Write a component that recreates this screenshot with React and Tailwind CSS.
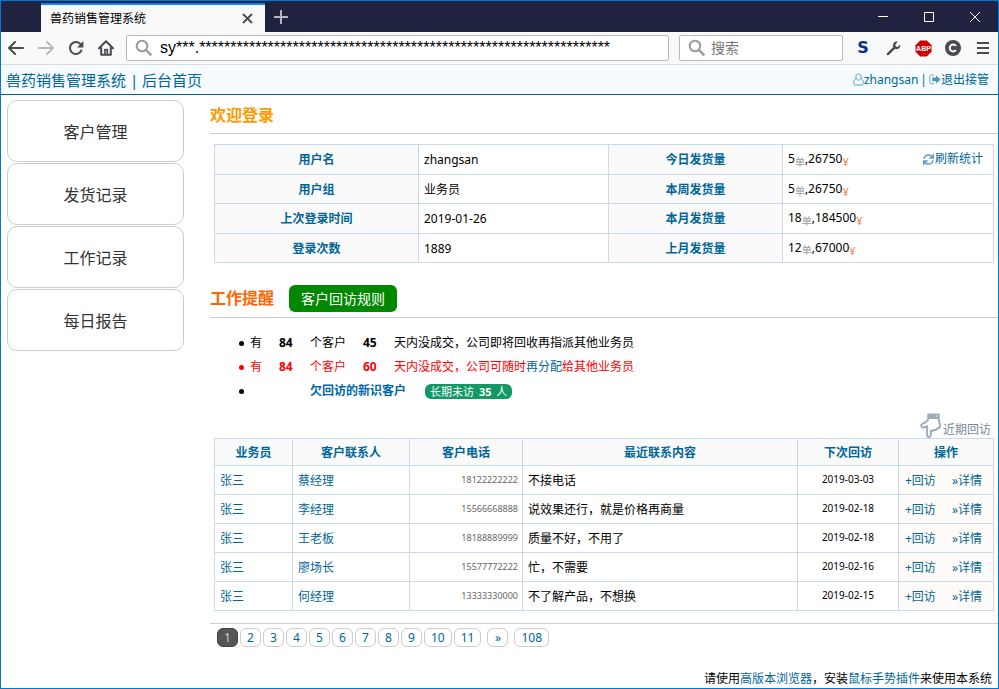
import { useState } from 'react'
import { FaSync } from 'react-icons/fa'

const menu = ['客户管理', '发货记录', '工作记录', '每日报告']

const stats = [
    { label: '用户名', value: 'zhangsan', period: '今日发货量', count: 5, amount: 26750 },
    { label: '用户组', value: '业务员', period: '本周发货量', count: 5, amount: 26750 },
    { label: '上次登录时间', value: '2019-01-26', period: '本月发货量', count: 18, amount: 184500 },
    { label: '登录次数', value: '1889', period: '上月发货量', count: 12, amount: 67000 },
]

const visits = [
    { sales: '张三', contact: '蔡经理', phone: '18122222222', content: '不接电话', next: '2019-03-03' },
    { sales: '张三', contact: '李经理', phone: '15566668888', content: '说效果还行，就是价格再商量', next: '2019-02-18' },
    { sales: '张三', contact: '王老板', phone: '18188889999', content: '质量不好，不用了', next: '2019-02-18' },
    { sales: '张三', contact: '廖场长', phone: '15577772222', content: '忙，不需要', next: '2019-02-16' },
    { sales: '张三', contact: '何经理', phone: '13333330000', content: '不了解产品，不想换', next: '2019-02-15' },
]

const pages = [2, 3, 4, 5, 6, 7, 8, 9, 10, 11]

const SearchIcon = () => (
    <svg width="18" height="18" viewBox="0 0 18 18" fill="none" stroke="#9a9a9a" strokeWidth="2" className="shrink-0">
        <circle cx="7" cy="7" r="5.3" />
        <path d="M11 11l5.3 5.3" strokeWidth="2.4" />
    </svg>
)

const UserIcon = () => (
    <svg width="11" height="13" viewBox="0 0 11 13" fill="none" stroke="#5b9cc0" className="shrink-0">
        <path d="M5.5 1C3.9 1 2.8 2.2 2.8 3.9S4 7.1 5.5 7.1 8.2 5.6 8.2 3.9 7.1 1 5.5 1z" />
        <path d="M2.8 5.8C1.3 6.6.7 8.3.7 10.2c0 1.2.7 1.8 1.8 1.8h6c1.1 0 1.8-.6 1.8-1.8 0-1.9-.6-3.6-2.1-4.4" />
    </svg>
)

const ExitIcon = () => (
    <svg width="12" height="11" viewBox="0 0 12 11" className="shrink-0">
        <path d="M5 1H2.4C1.4 1 .8 1.6.8 2.5v5.8c0 .9.6 1.5 1.6 1.5H5" fill="none" stroke="#6aa3c4" />
        <path d="M7 1.4l4.6 4L7 9.4V7.2H3.2V3.6H7z" fill="#5595bb" />
    </svg>
)

const HandDownIcon = () => (
    <svg width="22" height="25" viewBox="0 0 22 25" fill="none" stroke="#a0adbd" strokeWidth="2" strokeLinejoin="round" className="shrink-0">
        <rect x="8" y="1.2" width="11" height="4" fill="#a0adbd" strokeWidth="1.5" />
        <path d="M16.5 3.2h1" stroke="#fff" strokeWidth="1.2" />
        <path d="M8.2 6C8 8 6.5 8.6 4.8 9.6 3.2 10.5 1.2 10.8 1.2 12.6c0 1.7 1.7 2.3 3.3 1.7l2.6-1v8.6c0 1.3.7 2 1.8 2s1.9-.7 1.9-2v-4.4c1.3.8 2.7.4 3.3-.7 1.4.5 2.6-.1 3-1.3 1.7 0 2.9-1 2.9-2.7 0-2.6-1.2-4-1.2-6.8" />
    </svg>
)

const TitleBar = () => (
    <div className="flex h-[31px] items-end bg-[#202340]">
        <div className="ml-10 flex h-[29px] w-[224px] items-center justify-between border-t-2 border-[#0a84ff] bg-[#f9f9fa] pr-3 pl-[9px]">
            <span className="text-xs text-black">兽药销售管理系统</span>
            <button aria-label="关闭标签页">
                <svg width="11" height="11" viewBox="0 0 11 11" stroke="#4a4a4f" strokeWidth="1.8">
                    <path d="M1 1l9 9M10 1l-9 9" />
                </svg>
            </button>
        </div>
        <button aria-label="新标签页" className="flex h-[31px] w-8 items-center justify-center">
            <svg width="14" height="14" viewBox="0 0 14 14" stroke="#b4b5c0" strokeWidth="2">
                <path d="M7 0v14M0 7h14" />
            </svg>
        </button>
        <div className="ml-auto flex h-[30px]">
            <button aria-label="最小化" className="flex w-[46px] items-center justify-center">
                <svg width="10" height="10" viewBox="0 0 10 10" stroke="#fff"><path d="M0 4.5h10" /></svg>
            </button>
            <button aria-label="最大化" className="flex w-[46px] items-center justify-center">
                <svg width="10" height="10" viewBox="0 0 10 10" stroke="#fff" fill="none"><path d="M.5.5h9v9h-9z" /></svg>
            </button>
            <button aria-label="关闭" className="flex w-[46px] items-center justify-center">
                <svg width="10" height="10" viewBox="0 0 10 10" stroke="#fff"><path d="M0 0l10 10M10 0L0 10" /></svg>
            </button>
        </div>
    </div>
)

const ToolBar = () => {
    const [url, setUrl] = useState('sy***.' + '*'.repeat(66))
    const [keyword, setKeyword] = useState('')
    return (
        <div className="flex h-[33px] items-center border-b border-[#d8dbe2] bg-[#f9f9fa]">
            <button aria-label="后退" className="flex w-[30px] justify-center">
                <svg width="16" height="14" viewBox="0 0 16 14" fill="none" stroke="#4a4a4f" strokeWidth="2" strokeLinecap="round" strokeLinejoin="round">
                    <path d="M15 7H1.5M7 1L1 7l6 6" />
                </svg>
            </button>
            <button aria-label="前进" className="flex w-[30px] justify-center">
                <svg width="16" height="14" viewBox="0 0 16 14" fill="none" stroke="#b8b8ba" strokeWidth="2" strokeLinecap="round" strokeLinejoin="round">
                    <path d="M1 7h13.5M9 1l6 6-6 6" />
                </svg>
            </button>
            <button aria-label="刷新" className="flex w-[30px] justify-center">
                <svg width="16" height="16" viewBox="0 0 16 16" fill="none" stroke="#4a4a4f" strokeWidth="2">
                    <path d="M12.6 4.2A6 6 0 1 0 13.4 10.5" strokeLinecap="round" />
                    <path d="M15.4 1v6.4H9z" fill="#4a4a4f" stroke="none" />
                </svg>
            </button>
            <button aria-label="主页" className="flex w-[30px] justify-center">
                <svg width="16" height="16" viewBox="0 0 16 16" fill="none" stroke="#4a4a4f" strokeWidth="2" strokeLinecap="round" strokeLinejoin="round">
                    <path d="M1 8.2L8 1.2l7 7M3.2 8v6.8h9.6V8" />
                    <path d="M6.9 14.5V9.6h2.4v4.9" strokeWidth="1.6" />
                </svg>
            </button>
            <label className="ml-[5px] flex h-[26px] flex-1 items-center rounded-xs border border-[#b9b9bb] bg-white pl-2">
                <SearchIcon />
                <input
                    type="text"
                    aria-label="网址"
                    className="ml-[7px] min-w-0 flex-1 font-['Liberation_Sans',sans-serif] text-base leading-6 text-black outline-none"
                    value={url}
                    onChange={(e) => setUrl(e.target.value)}
                />
            </label>
            <label className="mr-[5px] ml-[10px] flex h-[26px] w-[164px] items-center rounded-xs border border-[#b9b9bb] bg-white pl-2">
                <SearchIcon />
                <input
                    type="text"
                    aria-label="搜索"
                    className="ml-[5px] min-w-0 flex-1 text-sm leading-5 outline-none placeholder:text-[#777]"
                    placeholder="搜索"
                    value={keyword}
                    onChange={(e) => setKeyword(e.target.value)}
                />
            </label>
            <button className="w-[30px] font-['DejaVu_Sans',sans-serif] text-base leading-6 font-bold text-[#00318b]">S</button>
            <button aria-label="开发者工具" className="flex w-[30px] justify-center">
                <svg width="15" height="15" viewBox="0 0 15 15">
                    <path d="M1.9 13.1L8.6 6.4" stroke="#4a4a4f" strokeWidth="2.4" strokeLinecap="round" />
                    <path d="M11.8.8C9.6 0 6.9 1.6 6.9 4.3c0 2.4 1.6 3.9 3.9 3.9 2.4 0 4.1-2.1 3.4-4.6l-2.4 2.3-2-.5-.5-2z" fill="#4a4a4f" />
                </svg>
            </button>
            <button aria-label="Adblock Plus" className="flex w-[30px] justify-center">
                <svg width="17" height="17" viewBox="0 0 17 17">
                    <path d="M5.2.5h6.6l4.7 4.7v6.6l-4.7 4.7H5.2L.5 11.8V5.2z" fill="#d00000" />
                    <text x="8.5" y="11.2" textAnchor="middle" fontSize="7" fontWeight="700" fill="#fff" fontFamily="Liberation Sans">ABP</text>
                </svg>
            </button>
            <button aria-label="扩展" className="flex w-[30px] justify-center">
                <svg width="16" height="16" viewBox="0 0 16 16">
                    <circle cx="8" cy="8" r="8" fill="#4a4a4f" />
                    <path d="M10.9 6A3.4 3.4 0 1 0 10.9 10" fill="none" stroke="#fff" strokeWidth="2" />
                </svg>
            </button>
            <button aria-label="菜单" className="flex w-[30px] justify-center">
                <svg width="12" height="12" viewBox="0 0 12 12" stroke="#4a4a4f" strokeWidth="2">
                    <path d="M0 1h12M0 6h12M0 11h12" />
                </svg>
            </button>
        </div>
    )
}

const StatsTable = () => (
    <table className="h-[119px] w-full table-fixed border-collapse">
        <colgroup>
            <col className="w-[204px]" />
            <col className="w-[190px]" />
            <col className="w-[174px]" />
            <col />
        </colgroup>
        <tbody>
            {stats.map((row, i) => (
                <tr key={row.label}>
                    <th className="border border-[#c9daea] bg-[#fafafa] pt-[2px] font-bold text-[#006699]">{row.label}</th>
                    <td className="border border-[#c9daea] px-[5px] pt-[2px]">{row.value}</td>
                    <th className="border border-[#c9daea] bg-[#fafafa] pt-[2px] font-bold text-[#006699]">{row.period}</th>
                    <td className="border border-[#c9daea] pr-[10px] pl-[5px]">
                        <div className="flex items-center justify-between">
                            <span>
                                {row.count}<sub className="text-[10px] text-[#999]">单</sub>,{row.amount}<sub className="text-[11px] text-[#f08040]">¥</sub>
                            </span>
                            {i === 0 && (
                                <a href="#" className="flex items-center text-[#006699]">
                                    <FaSync size={11} color="#5b9cc0" className="mr-px" />刷新统计
                                </a>
                            )}
                        </div>
                    </td>
                </tr>
            ))}
        </tbody>
    </table>
)

const VisitTable = () => (
    <table className="w-full table-fixed border-collapse">
        <colgroup>
            <col className="w-[78px]" />
            <col className="w-[117px]" />
            <col className="w-[113px]" />
            <col />
            <col className="w-[101px]" />
            <col className="w-[95px]" />
        </colgroup>
        <thead>
            <tr className="h-[27px] bg-[#fafafa] text-[#006699]">
                {['业务员', '客户联系人', '客户电话', '最近联系内容', '下次回访', '操作'].map((name) => (
                    <th key={name} className="border border-[#c9daea] pt-[2px] font-bold">{name}</th>
                ))}
            </tr>
        </thead>
        <tbody>
            {visits.map((row) => (
                <tr key={row.phone} className="h-[29px]">
                    <td className="border border-[#c9daea] px-[5px] pt-[2px]"><a href="#" className="text-[#006699]">{row.sales}</a></td>
                    <td className="border border-[#c9daea] px-[5px] pt-[2px]"><a href="#" className="text-[#006699]">{row.contact}</a></td>
                    <td className="border border-[#c9daea] px-1 text-right text-[9px] text-[#666]">{row.phone}</td>
                    <td className="border border-[#c9daea] px-[5px] pt-[2px]">{row.content}</td>
                    <td className="border border-[#c9daea] text-center text-[10px]">{row.next}</td>
                    <td className="border border-[#c9daea] bg-[#fffbf8] px-[6px] pt-[2px]">
                        <div className="flex gap-4 whitespace-nowrap text-[#006699]">
                            <a href="#">+回访</a>
                            <a href="#">»详情</a>
                        </div>
                    </td>
                </tr>
            ))}
        </tbody>
    </table>
)

const Pager = () => (
    <nav className="flex gap-[2px] border-t border-[#ccc] pt-1 pl-[7px] text-center leading-[17px] text-[#006699]">
        <span aria-current="page" className="min-w-[21px] rounded-md border border-[#444] bg-[#555] px-[6px] text-[#ccc]">1</span>
        {pages.map((page) => (
            <a key={page} href="#" className="min-w-[21px] rounded-md border border-[#ccc] px-[6px]">{page}</a>
        ))}
        <a href="#" className="mx-1 min-w-[21px] rounded-md border border-[#ccc] px-[6px]">»</a>
        <a href="#" className="min-w-[21px] rounded-md border border-[#ccc] px-[6px]">108</a>
    </nav>
)

const Reminder = ({ days, className, children }) => (
    <li className={className}>
        <span className="w-7">有</span>
        <b className="w-8 pl-px">84</b>
        <span className="w-[52px]">个客户</span>
        <b className="w-8 pl-px">{days}</b>
        <span>{children}</span>
    </li>
)

const App = () => {
    return (
        <div className="flex min-h-screen flex-col border border-[#0078d7] bg-white font-['Noto_Sans','Noto_Sans_CJK_SC',sans-serif] text-xs text-black">
            <TitleBar />
            <ToolBar />
            <header className="flex h-[30px] items-center justify-between border-b border-[#00639c] bg-[#f5fbff] pr-[9px] pl-[5px] text-[#006699]">
                <div className="text-[15px] leading-5">
                    <a href="#">兽药销售管理系统</a> | <a href="#">后台首页</a>
                </div>
                <div className="flex items-center">
                    <a href="#" className="flex items-center"><UserIcon />zhangsan</a>
                    <span className="mx-[2px]">|</span>
                    <a href="#" className="flex items-center"><ExitIcon />退出接管</a>
                </div>
            </header>
            <div className="flex">
                <nav className="mt-[5px] ml-[6px] flex w-[177px] shrink-0 flex-col gap-px">
                    {menu.map((item) => (
                        <a key={item} href="#" className="flex h-[62px] items-center justify-center rounded-[10px] border border-[#ccc] pt-[2px] text-base text-[#333]">{item}</a>
                    ))}
                </nav>
                <main className="ml-[26px] min-w-0 flex-1">
                    <h2 className="flex h-[39px] items-center border-b border-[#ccc] pt-[2px] text-base font-bold text-[#ff9900]">欢迎登录</h2>
                    <div className="mt-[10px] mr-1 ml-1">
                        <StatsTable />
                    </div>
                    <div className="mt-[15px] flex h-[40px] items-center border-b border-[#ccc] pt-px">
                        <h2 className="text-base font-bold text-[#ff6600]">工作提醒</h2>
                        <button className="ml-[15px] h-[27px] rounded-md bg-[#008800] px-3 pt-px text-sm leading-5 text-white">客户回访规则</button>
                    </div>
                    <ul className="mt-[13px] pl-[29px] leading-6 *:flex *:items-center *:before:mr-[6px] *:before:size-[5px] *:before:rounded-full *:before:bg-current">
                        <Reminder days={45} className="text-black">天内没成交，公司即将回收再指派其他业务员</Reminder>
                        <Reminder days={60} className="text-[#ff0000]">
                            天内没成交，公司可随时<a href="#" className="text-[#006699]">再分配</a>给其他业务员
                        </Reminder>
                        <li>
                            <a href="#" className="ml-[60px] font-bold text-[#0066aa]">欠回访的新识客户</a>
                            <a href="#" className="ml-[19px] rounded-md bg-[#119966] px-[5px] text-[11px] leading-[15px] text-white">长期未访 <b className="mx-[2px]">35</b> 人</a>
                        </li>
                    </ul>
                    <div className="mt-[9px] mr-[7px] flex h-[26px] items-end justify-end">
                        <a href="#" className="flex items-end text-[#778899]">
                            <HandDownIcon />
                            <span className="ml-px leading-4">近期回访</span>
                        </a>
                    </div>
                    <div className="mr-1 mb-3 ml-1">
                        <VisitTable />
                    </div>
                    <Pager />
                </main>
            </div>
            <footer className="mt-auto pr-[6px] text-right leading-[18px]">
                请使用<a href="#" className="text-[#006699]">高版本浏览器</a>，安装<a href="#" className="text-[#006699]">鼠标手势插件</a>来使用本系统
            </footer>
        </div>
    )
}

export default App
